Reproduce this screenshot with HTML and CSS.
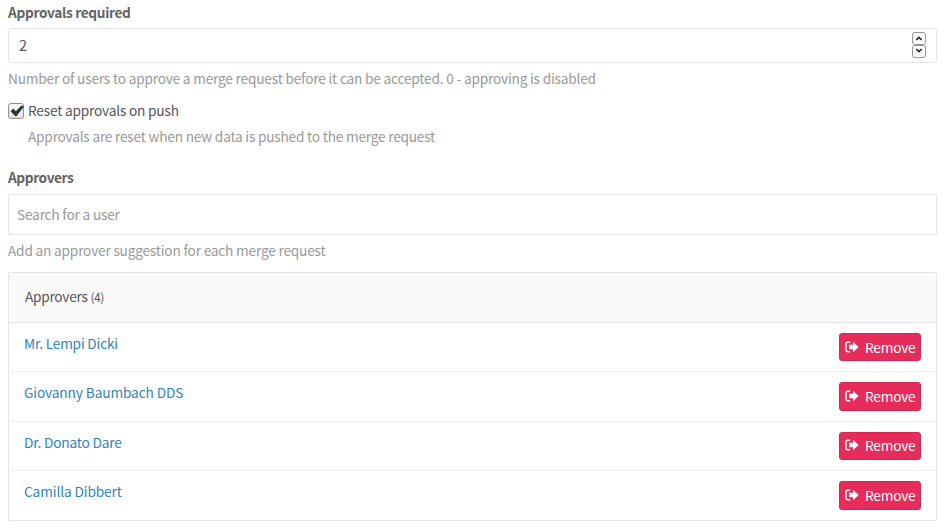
FILE: index.html
```html
<!DOCTYPE html>
<html lang="en">
<head>
<meta charset="utf-8">
<title>Merge request approvals</title>
<link rel="stylesheet" href="styles.css">
</head>
<body>
<svg class="sprite" aria-hidden="true">
  <symbol id="sign-out" viewBox="0 0 14 12">
    <path d="M5.2 1.2H3Q1 1.2 1 3.2v5.6q0 2 2 2h2.2" fill="none" stroke="currentColor" stroke-width="1.4"/>
    <path d="M8 .7 13.7 6 8 11.3V8.2H4.2V3.8H8z" fill="currentColor"/>
  </symbol>
</svg>
<main class="approvals">
  <section class="group">
    <div class="label"><span class="t-required">Approvals required</span></div>
    <div class="number-field">
      <span class="value">2</span>
      <span class="spinner">
        <span class="step"><svg viewBox="0 0 8 5"><path d="M1.3 4 4 1.4 6.7 4"/></svg></span>
        <span class="step down"><svg viewBox="0 0 8 5"><path d="M1.3 1 4 3.6 6.7 1"/></svg></span>
      </span>
    </div>
    <p class="help"><span class="t-number">Number of users to approve a merge request before it can be accepted. 0 - approving is disabled</span></p>
  </section>
  <section class="reset">
    <div class="check-row">
      <span class="checkbox"><svg viewBox="0 0 16 16"><path d="M1.6 7.6 4.6 4.8 7.2 7.8 13.4 1.6 16 2.6 7.4 13.6z"/></svg></span>
      <span class="t-reset">Reset approvals on push</span>
    </div>
    <p class="help indented"><span class="t-data">Approvals are reset when new data is pushed to the merge request</span></p>
  </section>
  <section class="group">
    <div class="label"><span class="t-approvers">Approvers</span></div>
    <div class="search"><span class="t-search">Search for a user</span></div>
    <p class="help"><span class="t-add">Add an approver suggestion for each merge request</span></p>
  </section>
  <section class="panel">
    <header class="panel-head"><span class="t-head">Approvers</span> <small>(4)</small></header>
    <ul class="list">
      <li><a>Mr. Lempi Dicki</a><span class="remove"><svg><use href="#sign-out"/></svg><span>Remove</span></span></li>
      <li><a class="t-wide">Giovanny Baumbach DDS</a><span class="remove"><svg><use href="#sign-out"/></svg><span>Remove</span></span></li>
      <li><a>Dr. Donato Dare</a><span class="remove"><svg><use href="#sign-out"/></svg><span>Remove</span></span></li>
      <li><a class="t-wide">Camilla Dibbert</a><span class="remove"><svg><use href="#sign-out"/></svg><span>Remove</span></span></li>
    </ul>
  </section>
</main>
</body>
</html>
```
FILE: styles.css
```css
* { box-sizing: border-box; }
body {
  margin: 0;
  background: #fff;
  color: #54565b;
  font: 13.7px/20px "Noto Sans CJK SC", "Noto Sans", sans-serif;
  letter-spacing: -0.2px;
}
.sprite { display: none; }
.approvals { padding: 2px 8px 0; }
.label { height: 20px; font-weight: 700; color: #626364; letter-spacing: -0.33px; }
.t-approvers { letter-spacing: -0.4px; }
.number-field {
  display: flex;
  align-items: flex-start;
  justify-content: space-between;
  height: 35px;
  margin-top: 6px;
  padding: 3px 10px 0;
  border: 1px solid #e5e5e5;
  border-radius: 3px;
}
.value { padding-top: 3px; font-size: 14.5px; }
.spinner { display: flex; flex-direction: column; width: 14px; }
.step {
  display: flex;
  align-items: center;
  justify-content: center;
  height: 13px;
  border: 1px solid #999792;
  border-radius: 3px;
}
.step svg { width: 8px; height: 5px; fill: none; stroke: #222; stroke-width: 1.6; }
.down { align-items: flex-start; padding-top: 2px; }
.help { margin: 5px 0 0; color: #999; white-space: nowrap; }
.t-data { letter-spacing: -0.22px; }
.reset { margin-top: 12px; }
.check-row { display: flex; align-items: center; gap: 4px; height: 20px; }
.checkbox {
  width: 16px;
  height: 16px;
  margin-top: 1px;
  border: 1px solid #8f8f8c;
  border-radius: 3px;
  background: linear-gradient(#fff, #e4e4e2);
}
.checkbox svg { display: block; width: 15px; height: 15px; fill: #2e3436; }
.reset .help { margin-top: 6px; }
.indented { padding-left: 20px; }
.reset + .group { margin-top: 21px; }
.search {
  height: 41px;
  margin-top: 7px;
  padding: 9px 0 0 8px;
  border: 1px solid #e5e5e5;
  border-radius: 1px;
  color: #999;
}
.panel {
  margin-top: 12px;
  border: 1px solid #e5e5e5;
  border-radius: 2px;
}
.panel-head {
  height: 50px;
  padding: 13px 16px 0;
  border-bottom: 1px solid #e5e5e5;
  background: #fafafa;
}
.t-head { letter-spacing: -0.27px; }
small { font-size: 12px; letter-spacing: -0.45px; }
.list { margin: 0; padding: 0; list-style: none; }
.list li {
  display: flex;
  justify-content: space-between;
  align-items: flex-start;
  height: 49.4px;
  padding: 10px 15px 0;
  border-bottom: 1px solid #f0f0f0;
}
.list li:last-child { height: 48.8px; border-bottom: 0; }
.list a { color: #3084bb; letter-spacing: -0.19px; }
.list .t-wide { letter-spacing: -0.12px; }
.remove {
  display: flex;
  align-items: flex-start;
  gap: 6px;
  width: 82px;
  height: 28.4px;
  padding: 2.6px 5px 0;
  border: 1px solid #d22852;
  border-radius: 3px;
  background: #e52c5a;
  color: #fff;
}
.remove svg { flex: none; width: 14px; height: 12px; margin-top: 4px; }
```
